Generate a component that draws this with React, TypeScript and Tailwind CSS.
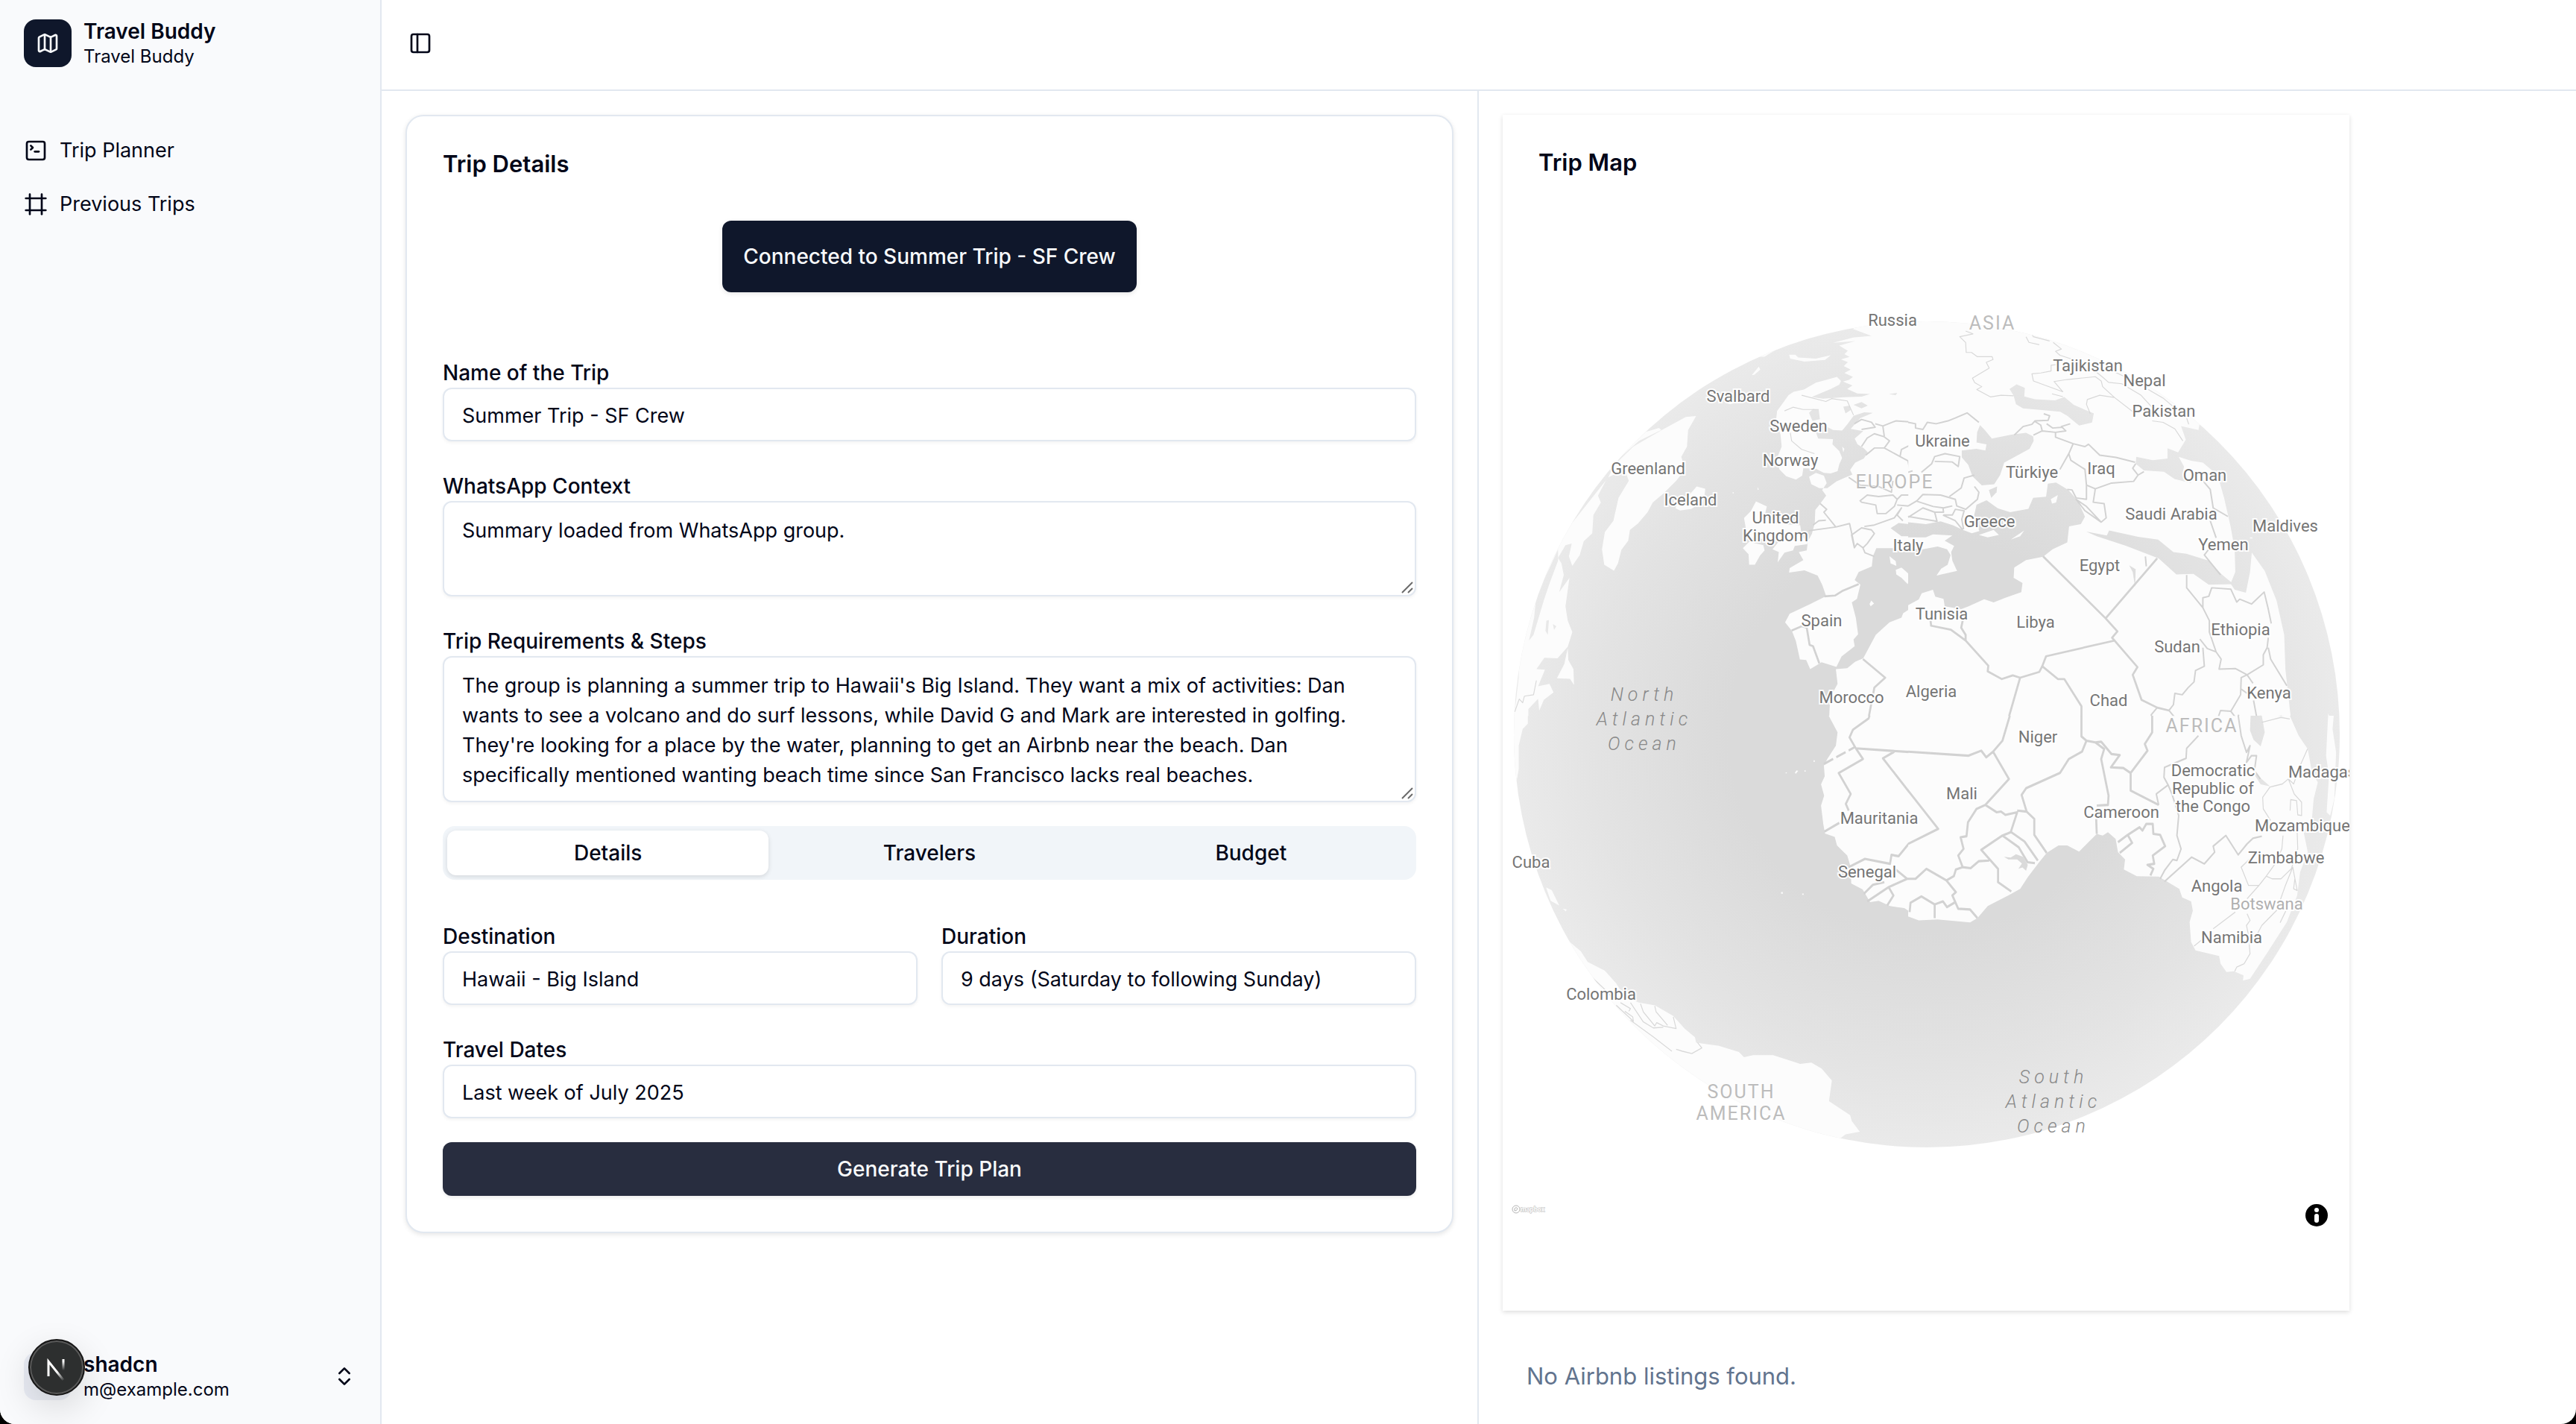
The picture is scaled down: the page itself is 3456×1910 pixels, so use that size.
import React, { useState } from 'react';
import { ChevronsUpDown, Frame, Map, PanelLeft, SquareTerminal } from 'lucide-react';
import { clsx } from 'clsx';

const navItems = [
  { label: 'Trip Planner', icon: SquareTerminal },
  { label: 'Previous Trips', icon: Frame },
];

const tabs = ['Details', 'Travelers', 'Budget'];

const requirements =
  "The group is planning a summer trip to Hawaii's Big Island. They want a mix of activities: Dan wants to see a volcano and do surf lessons, while David G and Mark are interested in golfing. They're looking for a place by the water, planning to get an Airbnb near the beach. Dan specifically mentioned wanting beach time since San Francisco lacks real beaches.";

type MapLabel = { x: number; y: number; lines: string[] };

const countries: MapLabel[] = [
  { x: 2539, y: 429, lines: ['Russia'] },
  { x: 2801, y: 490, lines: ['Tajikistan'] },
  { x: 2877, y: 510, lines: ['Nepal'] },
  { x: 2903, y: 551, lines: ['Pakistan'] },
  { x: 2332, y: 531, lines: ['Svalbard'] },
  { x: 2413, y: 571, lines: ['Sweden'] },
  { x: 2606, y: 591, lines: ['Ukraine'] },
  { x: 2402, y: 617, lines: ['Norway'] },
  { x: 2211, y: 628, lines: ['Greenland'] },
  { x: 2726, y: 633, lines: ['Türkiye'] },
  { x: 2819, y: 628, lines: ['Iraq'] },
  { x: 2958, y: 637, lines: ['Oman'] },
  { x: 2268, y: 670, lines: ['Iceland'] },
  { x: 2382, y: 706, lines: ['United', 'Kingdom'] },
  { x: 2669, y: 699, lines: ['Greece'] },
  { x: 2560, y: 731, lines: ['Italy'] },
  { x: 2913, y: 689, lines: ['Saudi Arabia'] },
  { x: 3066, y: 705, lines: ['Maldives'] },
  { x: 2983, y: 730, lines: ['Yemen'] },
  { x: 2817, y: 758, lines: ['Egypt'] },
  { x: 2444, y: 832, lines: ['Spain'] },
  { x: 2605, y: 823, lines: ['Tunisia'] },
  { x: 2731, y: 834, lines: ['Libya'] },
  { x: 3006, y: 844, lines: ['Ethiopia'] },
  { x: 2921, y: 867, lines: ['Sudan'] },
  { x: 2484, y: 935, lines: ['Morocco'] },
  { x: 2591, y: 927, lines: ['Algeria'] },
  { x: 2829, y: 939, lines: ['Chad'] },
  { x: 3044, y: 929, lines: ['Kenya'] },
  { x: 2734, y: 988, lines: ['Niger'] },
  { x: 2969, y: 1057, lines: ['Democratic', 'Republic of', 'the Congo'] },
  { x: 3131, y: 1035, lines: ['Madagascar'] },
  { x: 3089, y: 1107, lines: ['Mozambique'] },
  { x: 3067, y: 1150, lines: ['Zimbabwe'] },
  { x: 2632, y: 1064, lines: ['Mali'] },
  { x: 2846, y: 1089, lines: ['Cameroon'] },
  { x: 2521, y: 1097, lines: ['Mauritania'] },
  { x: 2505, y: 1169, lines: ['Senegal'] },
  { x: 2974, y: 1188, lines: ['Angola'] },
  { x: 2994, y: 1257, lines: ['Namibia'] },
  { x: 2054, y: 1156, lines: ['Cuba'] },
  { x: 2148, y: 1333, lines: ['Colombia'] },
];

const continents: MapLabel[] = [
  { x: 2673, y: 433, lines: ['ASIA'] },
  { x: 2542, y: 646, lines: ['EUROPE'] },
  { x: 2954, y: 973, lines: ['AFRICA'] },
  { x: 2336, y: 1478, lines: ['SOUTH', 'AMERICA'] },
];

const oceans: MapLabel[] = [
  { x: 2206, y: 964, lines: ['North', 'Atlantic', 'Ocean'] },
  { x: 2755, y: 1477, lines: ['South', 'Atlantic', 'Ocean'] },
];

function Label({ label, leading, className }: { label: MapLabel; leading: number; className: string }) {
  const top = label.y - ((label.lines.length - 1) * leading) / 2;
  return (
    <text textAnchor="middle" className={className}>
      {label.lines.map((line, i) => (
        <tspan key={line} x={label.x} y={top + i * leading} dy="0.36em">
          {line}
        </tspan>
      ))}
    </text>
  );
}

const land = 'fill-[#fcfcfc]';
const bold = 'fill-none stroke-[#d2d2d2] stroke-[7px]';
const border = 'fill-none stroke-[#d2d2d2] stroke-[5px]';
const thin = 'fill-none stroke-[#d8d8d8] stroke-[3px]';

function Globe() {
  return (
    <svg viewBox="2016 282 1136 1476" className="block w-full h-auto" role="img" aria-label="Trip map">
      <defs>
        <radialGradient id="sphere" gradientUnits="userSpaceOnUse" cx="2585" cy="985" r="554">
          <stop offset="0" stopColor="#dadada" />
          <stop offset="0.48" stopColor="#dadada" />
          <stop offset="0.8" stopColor="#e3e3e3" />
          <stop offset="1" stopColor="#eaeaea" />
        </radialGradient>
        <clipPath id="globe"><circle cx="2585" cy="985" r="554" /></clipPath>
        <clipPath id="nw"><rect x="0" y="0" width="1464" height="1464" /></clipPath>
        <clipPath id="sw"><rect x="0" y="0" width="1464" height="1568" /></clipPath>
        <clipPath id="ne"><rect x="0" y="0" width="1568" height="1464" /></clipPath>
        <clipPath id="se"><rect x="0" y="0" width="1568" height="1568" /></clipPath>
        {/* everything painted black here lets the ocean show through */}
        <mask id="landmass" maskUnits="userSpaceOnUse" x="2016" y="400" width="1136" height="1200">
          <g transform="translate(2000 400) scale(0.38265)" fill="#fff">
            <g clipPath="url(#nw)">
              <path d="M1568 60 L1290 92 L1270 108 L1335 132 L1270 138 L1200 156 L1278 150 L1222 166 L1252 184 L1240 196 L1258 206 L1228 214 L1252 224 L1238 238 L1262 250 L1240 262 L1270 276 L1256 286 L1235 292 L1268 306 L1250 318 L1285 334 L1330 336 L1300 345 L1240 347 L1165 352 L1125 346 L1192 318 L1222 303 L1228 290 L1214 276 L1140 296 L1098 320 L1062 328 L1044 340 L1026 365 L1004 395 L1000 430 L1016 478 L1020 520 L1004 560 L1012 600 L1036 624 L1070 636 L1092 622 L1096 596 L1140 598 L1168 612 L1192 614 L1216 606 L1222 582 L1232 560 L1222 536 L1198 512 L1200 494 L1148 492 L1140 470 L1158 440 L1200 462 L1232 464 L1250 442 L1272 412 L1310 400 L1340 402 L1296 420 L1262 458 L1306 466 L1276 492 L1286 512 L1308 526 L1322 540 L1308 562 L1278 576 L1260 602 L1268 618 L1240 630 L1212 642 L1180 666 L1152 666 L1124 652 L1116 626 L1140 612 L1168 622 L1178 648 L1162 672 L1176 692 L1154 722 L1138 742 L1136 790 L1126 826 L1112 852 L1108 884 L1080 890 L1096 918 L1048 946 L1046 962 L1100 954 L1146 972 L1162 1004 L1176 1044 L1120 1072 L1048 1106 L1032 1136 L1056 1166 L1070 1202 L1084 1266 L1106 1268 L1120 1300 L1160 1276 L1212 1292 L1230 1256 L1276 1220 L1272 1196 L1288 1178 L1280 1120 L1266 1066 L1284 1054 L1296 1004 L1276 988 L1290 960 L1336 940 L1340 904 L1352 876 L1410 876 L1440 888 L1568 878 L1568 834 L1440 834 L1402 806 L1430 788 L1500 796 L1568 782Z" />
              <path d="M1568 1016 L1530 1026 L1504 1046 L1502 1068 L1446 1104 L1440 1120 L1398 1136 L1350 1180 L1320 1236 L1306 1262 L1278 1274 L1250 1297 L1210 1300 L1216 1352 L1190 1400 L1186 1480 L1200 1500 L1215 1568 L1568 1568Z" />
              <path d="M930 712 L968 730 L960 764 L1000 790 L1085 796 L1090 830 L1112 862 L1066 868 L1060 884 L1030 892 L1006 926 L1010 890 L988 880 L1012 850 L900 838 L888 770 L912 746Z" />
              <path d="M884 876 L906 854 L956 866 L960 884 L944 902 L926 934 L906 934 L904 898Z" />
              <path d="M664 744 L648 736 L660 700 L694 692 L722 660 L752 668 L750 690 L742 714 L704 738Z" />
              <path d="M720 413 L692 462 L688 520 L668 556 L682 600 L650 640 L606 684 L568 716 L550 750 L516 790 L488 812 L482 850 L458 882 L446 930 L432 955 L398 934 L390 880 L400 820 L430 780 L448 700 L484 640 L470 600 L412 628 L436 582 L500 520 L600 462 L684 416Z" />
              <path d="M590 455 L540 470 L470 530 L440 570 L520 500 L598 462Z" />
              <path d="M404 638 L376 692 L386 716 L360 760 L356 824 L326 852 L312 900 L286 938 L274 905 L284 860 L262 866 L236 910 L248 930 L256 970 L240 1030 L276 980 L262 1080 L270 1130 L286 1170 L270 1222 L234 1262 L188 1260 L160 1300 L190 1302 L166 1360 L206 1352 L220 1382 L186 1408 L170 1446 L166 1404 L132 1440 L132 1488 L112 1510 L106 1568 L40 1568 L40 1150 L130 980 L260 820Z" />
              <path d="M270 1226 L258 1282 L232 1332 L278 1334 L292 1356 L290 1300 L272 1268Z" />
              <path d="M1046 198 L1068 198 L1078 208 L1140 212 L1192 200 L1172 216 L1100 222 L1050 212Z" />
              <path d="M820 366 L850 348 L892 356 L840 372Z M1398 904 L1420 922 L1422 938 L1402 930Z M1420 952 L1440 944 L1472 972 L1462 1002 L1440 980 L1422 968Z M1328 1072 L1334 1060 L1344 1070 L1332 1080Z M1232 520 L1240 528 L1236 540Z M938 205 L1000 180 L960 205Z M915 270 L940 240 L945 250 L925 268Z M935 662 L940 670 L936 672Z M848 680 h4 v4 h-4Z" />
              <path fill="#000" d="M236 880 L204 950 L160 1040 L152 1120 L134 1200 L150 1180 L186 1060 L206 1000 L236 920Z M195 1130 L204 1128 L200 1180 L192 1166Z M218 1142 L230 1150 L222 1162Z M1116 402 L1130 388 L1150 392 L1154 424 L1128 430Z M1272 374 L1300 364 L1322 376 L1300 386Z M1236 380 L1258 376 L1262 392 L1244 404Z M1396 336 L1425 332 L1420 340Z M84 1452 L98 1330 L100 1240 L90 1330Z" />
            </g>
          </g>
          <g transform="translate(2560 400) scale(0.3954 0.38265)" fill="#000">
            <g clipPath="url(#ne)">
              <rect x="0" y="0" width="1568" height="1568" fill="#fff" />
              <path d="M244 445 L260 462 L284 492 L350 478 L400 472 L424 484 L426 500 L412 528 L362 556 L326 576 L312 620 L292 652 L250 656 L218 624 L204 584 L182 558 L182 534 L232 528 L262 534 L266 512 L232 506 L234 470Z" />
              <path d="M274 672 L302 660 L300 680 L282 700Z" />
              <path d="M344 318 L368 302 L396 314 L394 344 L430 354 L498 358 L530 346 L562 374 L630 404 L624 436 L580 446 L540 412 L516 398 L390 386 L366 372 L358 342Z" />
              <path d="M0 785 L60 792 L110 782 L152 796 L186 812 L216 824 L242 816 L222 770 L232 724 L266 708 L304 736 L346 750 L408 738 L424 700 L468 696 L474 650 L502 646 L544 672 L576 710 L600 766 L586 792 L546 800 L540 856 L490 880 L458 906 L400 918 L360 944 L358 980 L388 998 L384 1030 L330 1050 L290 1066 L258 1055 L205 1080 L180 1090 L124 1080 L120 1054 L92 1046 L84 1022 L46 1034 L36 1056 L0 1076Z" />
              <path fill="#fff" d="M0 838 L60 838 L84 828 L150 832 L124 850 L156 868 L146 890 L150 920 L166 956 L96 972 L112 948 L134 934 L144 900 L132 880 L100 870 L50 880 L0 876Z M240 830 L290 812 L308 830 L270 838Z M348 846 L394 814 L380 834Z M484 704 L508 690 L502 716 L488 720Z" />
              <path d="M604 818 L674 832 L682 814 L780 836 L848 846 L900 890 L944 896 L1020 920 L1062 966 L1104 1002 L1020 1004 L968 966 L910 968 L850 912 L740 868 L640 834Z" />
              <path d="M774 556 L830 568 L880 562 L880 526 L916 540 L942 496 L926 448 L985 462 L990 435 L1568 435 L1568 1568 L1310 1568 L1295 1440 L1280 1300 L1276 1180 L1250 1060 L1210 956 L1166 892 L1160 960 L1146 1032 L1108 1022 L1094 1000 L1110 960 L1108 880 L1094 800 L1072 700 L1050 620 L1000 576 L960 570 L918 556 L936 590 L930 620 L962 648 L904 634 L868 608 L800 604 L772 580Z" />
              <path fill="#fff" d="M1425 1455 L1444 1500 L1444 1568 L1424 1568Z M1160 838 h8 v4 h-8Z" />
              <path d="M1172 1466 L1198 1462 L1194 1500 L1210 1530 L1200 1568 L1162 1568 L1160 1500Z M750 936 L772 950 L770 1012 L762 960Z" />
            </g>
          </g>
          <g transform="translate(2000 960) scale(0.38265 0.44643)" fill="#fff">
            <g clipPath="url(#sw)">
              <path d="M1568 0 H1185 L1216 50 L1210 90 L1180 130 L1168 150 L1171 182 L1158 206 L1169 240 L1158 270 L1166 326 L1172 354 L1206 364 L1214 390 L1250 420 L1262 455 L1264 504 L1304 522 L1330 560 L1360 556 L1400 572 L1450 578 L1482 596 L1508 615 L1568 612Z" />
              <path d="M40 0 H130 L130 24 L112 40 L98 90 L98 160 L88 210 L40 210Z" />
              <path d="M272 676 L316 708 L340 740 L400 766 L440 804 L470 846 L520 862 L576 870 L640 902 L680 940 L716 966 L720 982 L800 992 L870 1010 L888 1026 L920 1020 L990 1020 L1085 1046 L1124 1042 L1160 1060 L1196 1096 L1186 1158 L1260 1200 L1266 1218 L1294 1250 L1244 1258 L1225 1270 L1200 1500 L200 1500 L200 760Z" />
              <path d="M166 480 L178 500 L172 506Z M194 516 L214 524 L240 570 L210 556Z M252 580 L266 582 L264 588Z M1066 172 L1072 164 L1078 166 L1070 174Z M1132 134 h4 v5 h-4Z M1100 164 h4 v4 h-4Z M1034 170 h4 v3 h-4Z M1018 530 h6 v5 h-6Z M1092 534 h5 v4 h-5Z" />
            </g>
          </g>
          <g transform="translate(2560 960) scale(0.3954 0.44643)" fill="#000">
            <g clipPath="url(#se)">
              <rect x="0" y="0" width="1568" height="1568" fill="#fff" />
              <path d="M0 603 L36 615 L100 612 L210 621 L235 608 L270 572 L340 540 L380 520 L406 485 L440 445 L470 412 L510 390 L540 390 L580 408 L640 355 L660 360 L678 350 L704 370 L712 410 L736 432 L732 462 L776 482 L850 483 L920 520 L930 546 L960 558 L966 586 L955 620 L960 680 L975 705 L1055 722 L1060 745 L1080 770 L1105 768 L1138 780 L1136 796 L1160 790 L1220 710 L1285 620 L1320 540 L1330 470 L1356 410 L1342 350 L1370 310 L1376 250 L1390 200 L1370 170 L1356 100 L1325 60 L1295 0 L1568 0 L1568 1568 L0 1568Z" />
              <path fill="#fff" d="M1425 0 L1444 0 L1440 40 L1452 110 L1446 250 L1432 300 L1420 290 L1428 180 L1418 120Z" />
              <path d="M1162 0 H1200 L1210 50 L1196 92 L1172 72 L1160 44Z M1168 168 L1184 178 L1228 212 L1196 206Z M325 424 L348 426 L366 416 L390 424 L406 448 L400 466 L388 456 L374 460 L386 444 L370 432 L340 432Z" />
            </g>
          </g>
        </mask>
      </defs>

      <circle cx="2585" cy="985" r="554" fill="url(#sphere)" />
      <g clipPath="url(#globe)">
        <rect x="2016" y="400" width="1136" height="1200" mask="url(#landmass)" className={land} />

        {/* national borders, one group for each quarter of the globe */}
        <g transform="translate(2000 400) scale(0.38265)">
          <g clipPath="url(#nw)" strokeLinejoin="round">
            <path className={border} d="M1275 440 L1300 425 L1335 435 L1348 452 L1300 460 M1348 440 L1375 448 L1420 430 L1490 435 L1498 460 L1530 435 L1568 440 M1300 520 L1320 490 L1345 475 L1378 485 L1398 500 L1380 525 L1345 525 L1315 550 M1375 450 L1380 485 M1380 525 L1435 555 L1440 530 L1480 510 M1435 555 L1463 570 L1470 605 L1510 610 L1568 575 M1255 628 L1295 655 L1360 660 L1405 680 L1410 640 M1295 710 L1320 690 L1360 695 L1410 690 L1425 705 L1415 730 L1385 755 L1355 755 L1350 725 L1300 715Z M1425 705 L1440 690 L1500 690 L1520 665 M1425 725 L1485 730 L1520 690 L1568 692" />
            <path className={thin} d="M1090 340 L1175 362 L1195 352 L1250 360 L1272 410 M1030 395 L1060 382 L1095 390 L1150 390 M1050 470 L1055 500 L1090 530 L1135 545" />
            <path className={border} d="M1265 830 L1300 805 L1335 812 L1345 825 L1320 860 L1305 875 L1285 860 L1275 875Z M1310 800 L1345 795 L1415 770 L1440 735 L1425 760 L1445 780 M1115 815 L1210 802 L1258 790 L1268 835 L1275 870 M1155 720 L1178 740 L1168 750 L1210 802 M1130 795 L1150 780 L1175 778 M1305 875 L1312 892 L1345 905 M1465 765 L1510 730 L1555 755 L1560 782Z" />
            <path className={bold} d="M1170 1045 L1208 1042 L1235 1025 L1290 1002 M1055 1165 L1090 1150 L1108 1155 L1118 1215 L1130 1220 L1152 1280 M1305 1265 L1383 1330 L1345 1365 L1325 1470 L1270 1510 L1258 1535 M1540 1120 L1542 1145 L1568 1150" />
            <path className={thin} d="M84 1450 L100 1405 L112 1418 L118 1395 L150 1390 L160 1340" />
          </g>
        </g>
        <g transform="translate(2560 400) scale(0.3954 0.38265)">
          <g clipPath="url(#ne)" strokeLinejoin="round">
            <path className={thin} d="M195 115 L220 125 L175 135 L195 155 L197 190 L215 190 L235 205 L285 205 L288 215 L265 225 L275 245 L218 280 L226 296 L250 310 L233 320 L280 346 L315 340 L358 342 M400 135 L410 155 L445 163 M365 112 L420 125 L425 135 L480 150 M492 155 L520 178 L500 186 L515 200 L560 215 M510 232 L485 235 V255 L450 262 L420 265 L425 290 L525 328 L495 292 L540 285 L635 275 L655 290 L660 310 L700 348 L650 340 L608 355 L605 372 L618 405 M640 260 L658 275 L680 295 L725 300 L790 340 L830 385 M700 348 L765 400 M815 320 L865 350 L945 420 L952 442 M828 430 L865 435 L905 458 L932 500 M700 258 L735 275 M488 335 L525 345" />
            <path className={border} d="M360 480 L390 450 L420 442 L430 430 L475 428 L480 412 L460 405 M425 480 L455 465 L450 445 L430 432 M455 465 L500 470 L535 465 L520 450 L550 440 M470 440 L490 455 L525 452 M500 470 V487 L560 510 L600 520 L612 512 L650 550 L705 558 L770 575 M560 510 L545 545 L515 600 M545 545 L552 568 L600 600 L605 655 L605 705 L570 700 L556 672 L540 670 M605 655 L635 668 L690 648 L765 642 L780 620 L800 608 M772 580 L762 596 L780 620 M635 668 L628 715 L665 720 L672 770 L655 785 L600 745 L570 705 L605 730 L655 785 M1000 640 L1025 670 L1035 735 L1085 765 M1025 780 L1045 840 M1020 880 L1005 900 L1060 970" />
            <path className={border} d="M0 435 L25 440 L25 455 L50 460 L65 435 L95 440 L135 430 L160 420 L200 402 L240 435 M0 610 L15 605 M45 610 L80 580 L90 555 L125 545 L175 555 L170 590 L150 574 L90 572 M140 695 L180 665 L190 630 L225 620 M0 728 L30 710 L50 688 L110 690 L160 705 L165 728 L195 740 L235 705 L240 680 L225 660 M30 712 L85 730 L120 735 L150 728 M0 768 L50 735 L90 750 L98 782 L0 765 M90 750 L120 750 L118 735 M118 760 L160 780 L185 812 M120 760 L150 760 L160 740 L190 745 L182 775 L188 810" />
            <path className={bold} d="M458 905 L670 1122 L845 912 M670 1122 L710 1168 L692 1190 L778 1293 L762 1320 L792 1408 L845 1435 L885 1445 M700 1200 L468 1255 L455 1290 L445 1310 L380 1330 L355 1322 L318 1335 L270 1308 L272 1288 L195 1200 L145 1162 L78 1148 L75 1120 M195 1200 L195 1180 L180 1155 L185 1130 M380 1330 L330 1510 M455 1290 L508 1335 L530 1335 L588 1430 L588 1550" />
            <path className={border} d="M945 970 V1015 L1000 1085 L1022 1130 L1022 1170 L1045 1240 L1015 1228 L990 1195 M1000 1085 L1000 1050 L1020 1045 L1030 1015 L1095 1020 L1115 1065 L1125 1055 L1165 1072 L1208 1030 L1222 1090 L1232 1140 M1045 1240 L1062 1265 L1055 1300 L1110 1298 L1150 1320 L1205 1285 V1250 L1218 1225 L1222 1190 M1222 1225 L1230 1265 L1285 1358 M805 905 L808 940" />
            <path className={border} d="M1000 1225 L1005 1290 L975 1305 L970 1345 L950 1365 L930 1390 L905 1385 L900 1425 L885 1445 L905 1470 L1050 1475 L1060 1445 L1095 1448 L1128 1390 L1130 1330 L1150 1320 M1095 1448 L1115 1475 L1118 1530 M845 1435 L825 1460 V1530 M1150 1320 L1170 1350 M1172 1410 L1182 1465 L1198 1490 L1265 1465 L1295 1475 M1130 1370 L1150 1385 M1115 1475 L1122 1460" />
          </g>
        </g>
        <g transform="translate(2000 960) scale(0.38265 0.44643)">
          <g clipPath="url(#sw)" strokeLinejoin="round">
            <path className={bold} d="M1568 115 L1280 98 L1258 65 L1270 42 L1325 8 L1335 -20 M1280 98 L1305 130 L1220 172 L1262 235 L1245 265 L1255 285 M1415 108 L1375 128 L1568 340 L1465 385 L1430 422 L1405 418 L1400 445 L1312 430 L1255 455 M1170 348 L1222 322 M1420 462 L1460 490 L1495 490 L1528 460 L1568 480 M1460 490 L1395 515 L1320 558 M1395 515 L1412 540 L1390 570 M1308 535 L1340 508 L1380 500 M1470 590 L1475 560 L1508 543 L1552 567 V608" />
            <path className={bold} strokeDasharray="36 12" d="M1168 145 L1275 95" />
            <path className={thin} d="M455 862 L490 880 L484 888 M490 862 L535 920 L570 938 L605 936 M525 865 L535 890 L575 932 L582 922 L605 932 L650 940 L640 905 M575 872 L580 890 L620 930 M440 870 L500 918 L498 905 L470 888 M490 915 L570 965 L635 1008 M650 1002 L672 1008 L705 1015 L740 998 L725 982 M345 778 L395 818 L430 850" />
          </g>
        </g>
        <g transform="translate(2560 960) scale(0.3954 0.44643)">
          <g clipPath="url(#se)" strokeLinejoin="round">
            <path className={bold} d="M345 0 L320 75 L288 108 L265 125 L248 105 L205 120 L0 108 M-80 128 L0 225 L102 340 L0 385 M288 108 L342 190 L262 268 L300 290 L315 288 L330 298 L370 290 L348 350 L320 360 L248 403 L305 460 L305 500 L350 528 M262 268 L232 280 L203 320 L198 362 L178 365 L188 400 L170 420 L185 455 L212 458 L240 437 L275 435 M370 285 L402 288 L428 310 L428 358 L470 412 M402 288 L385 238 L400 218 L515 172 L545 130 L590 108 L605 75 M588 0 V62 L605 75 L635 80 L665 100 L655 130 L680 240 L678 268 L640 270 M635 80 L655 78 L690 115 L718 118 L688 155 L730 157 L755 172 L812 105 L803 85 L828 50 V0 M755 172 V225 L850 268 M638 310 L640 355 M350 350 L395 378 L440 435 M320 360 L375 395 L405 440 L430 443" />
            <path className={bold} d="M185 455 L162 462 L155 482 L130 495 L62 460 L25 490 L0 490 M130 495 L162 530 L150 540 L160 560 L170 580 L210 582 L235 608 M160 560 L132 575 L118 558 L90 567 V608 M90 567 L45 543 L8 562 L5 590 M712 380 L745 358 L785 335 L795 345 L808 325 L830 325 L832 355 L855 358 L872 392 L830 420 L835 445 L812 448 L832 460 L822 480 M745 358 L760 382 L718 412" />
            <path className={border} d="M850 268 L842 235 L882 208 L868 185 L870 155 L943 128 L945 98 L985 60 M882 208 L895 235 L918 300 L912 360 L926 400 L912 435 L898 432 L870 465 L855 490 M870 498 L962 425 L1005 445 L1040 410 L1035 392 L1078 360 L1120 418 L1150 385 L1170 368 L1200 362 M1120 0 L1130 60 L1148 110 L1160 90 L1148 140 L1165 120 L1182 120 L1175 165 L1195 190" />
            <path className={thin} d="M1215 482 L1190 510 L1155 510 L1130 455 L1165 425 M1215 482 L1245 445 L1268 400 L1272 360 M1190 510 L1150 550 M1035 640 L1110 590 M970 692 L998 672 M1150 595 L1160 615 L1148 630 L1155 660 L1160 715 L1140 745 L1115 755 L1108 768 M1170 680 L1200 630 L1250 585 L1280 510 L1305 455 L1320 525 L1308 520 L1312 490 M1215 482 L1235 490 L1265 490 L1300 460 L1322 400 L1320 350 M1228 214 L1270 205 L1290 190 L1310 235 L1335 260 V300 L1322 298 L1318 255 L1298 252 L1296 285 M1228 214 L1203 245 L1205 280 L1230 315 M1355 100 L1330 150 L1308 205 L1290 190 M1200 20 L1265 5 L1295 10 M1262 622 L1285 580" />
          </g>
        </g>
      </g>

      {countries.map(label => (
        <Label
          key={label.lines[0]}
          label={label}
          leading={24}
          className="font-['Roboto'] text-[22px] font-normal fill-[#757575] stroke-white/90 stroke-[4px] [paint-order:stroke]"
        />
      ))}
      <Label
        label={{ x: 3041, y: 1212, lines: ['Botswana'] }}
        leading={24}
        className="font-['Roboto'] text-[22px] font-normal fill-[#b0b0b0] stroke-white/90 stroke-[4px] [paint-order:stroke]"
      />
      {continents.map(label => (
        <Label
          key={label.lines[0]}
          label={label}
          leading={29}
          className="font-['Roboto'] text-[25px] font-normal tracking-[2px] fill-[#bcbcbc] stroke-white/70 stroke-[2px] [paint-order:stroke]"
        />
      ))}
      {oceans.map(label => (
        <Label
          key={label.lines[0]}
          label={label}
          leading={33}
          className="font-['Roboto'] text-[25px] font-light italic tracking-[6px] fill-[#888888]"
        />
      ))}

      {/* attribution mark */}
      <g className="fill-white stroke-[#b5b5b5] stroke-1">
        <circle cx="2034" cy="1622" r="5" />
        <path d="M2032 1624 V1621 L2034 1619.500 L2036 1621 L2034.500 1623.500Z" />
        <text x="2040" y="1625" className="font-['Roboto'] text-[9px] font-bold [paint-order:stroke]">mapbox</text>
      </g>
    </svg>
  );
}

const control =
  'block w-full rounded-[12px] border-2 border-slate-200 bg-white px-6 text-[27px] text-slate-950 shadow-[0_2px_4px_rgba(0,0,0,0.05)] outline-none';

function Field({ id, label, value }: { id: string; label: string; value: string }) {
  return (
    <div>
      <label htmlFor={id} className="block text-[28px] leading-[40px] font-medium">{label}</label>
      <input id={id} type="text" defaultValue={value} className={clsx(control, 'h-[72px] pt-0.5')} />
    </div>
  );
}

function TextField({ id, label, value, rows }: { id: string; label: string; value: string; rows: string }) {
  return (
    <div>
      <label htmlFor={id} className="block text-[28px] leading-[40px] font-medium">{label}</label>
      <div className="relative">
        <textarea id={id} defaultValue={value} className={clsx(control, rows, 'resize-none overflow-hidden pt-[18px] pb-[14px] leading-[40px]')} />
        <svg viewBox="0 0 16 16" className="absolute right-1 bottom-1 size-4 fill-none stroke-[#6b6b6b] stroke-2 pointer-events-none">
          <path d="M1 15 L15 1 M9 15 L15 9" />
        </svg>
      </div>
    </div>
  );
}

function Sidebar() {
  return (
    <aside className="flex w-[512px] shrink-0 flex-col border-r-2 border-slate-200 bg-[#f9fafc] px-4 pt-[10px] pb-4">
      <a href="#" className="flex h-24 items-center gap-4 px-4">
        <span className="flex size-16 items-center justify-center rounded-[16px] bg-slate-900 text-slate-50">
          <Map className="size-8" />
        </span>
        <span className="grid">
          <span className="text-[28px] leading-[36px] font-semibold">Travel Buddy</span>
          <span className="text-[24px] leading-[32px]">Travel Buddy</span>
        </span>
      </a>

      <nav className="mt-16 flex flex-1 flex-col gap-2">
        {navItems.map(item => {
          const Icon = item.icon;
          return (
            <a key={item.label} href="#" className="flex h-16 items-center gap-4 px-4 text-[27px]">
              <Icon className="size-8" />
              <span>{item.label}</span>
            </a>
          );
        })}
      </nav>

      <button type="button" className="flex h-24 items-center gap-4 px-4 text-left">
        <span className="size-16 rounded-[16px] bg-[#e9ecf4]" />
        <span className="grid flex-1">
          <span className="text-[28px] leading-[36px] font-semibold">shadcn</span>
          <span className="text-[24px] leading-[32px]">m@example.com</span>
        </span>
        <ChevronsUpDown className="size-8" />
      </button>
    </aside>
  );
}

function TripForm() {
  const [active, setActive] = useState('Details');

  return (
    <form className="rounded-[24px] border-2 border-slate-200 bg-white p-12 shadow-[0_2px_6px_rgba(0,0,0,0.1)]">
      <h2 className="text-[31px] leading-[32px] font-semibold">Trip Details</h2>

      <div className="mt-[60px] flex justify-center">
        <button type="button" className="h-24 rounded-[12px] bg-slate-900 px-7 text-[28px] font-medium text-slate-50 shadow-[0_2px_6px_rgba(0,0,0,0.1)]">
          Connected to Summer Trip - SF Crew
        </button>
      </div>

      <div className="mt-[88px] flex flex-col gap-10">
        <Field id="name" label="Name of the Trip" value="Summer Trip - SF Crew" />
        <TextField id="context" label="WhatsApp Context" value="Summary loaded from WhatsApp group." rows="h-[128px]" />
        <TextField id="requirements" label="Trip Requirements & Steps" value={requirements} rows="h-[196px]" />
      </div>

      <div role="tablist" className="mt-8 grid h-[72px] grid-cols-3 rounded-[16px] bg-slate-100 p-[6px]">
        {tabs.map(tab => (
          <button
            key={tab}
            type="button"
            role="tab"
            aria-selected={tab === active}
            onClick={() => setActive(tab)}
            className={clsx(
              'rounded-[12px] text-[28px] font-medium',
              tab === active && 'bg-white shadow-[0_2px_6px_rgba(0,0,0,0.12)]'
            )}
          >
            {tab}
          </button>
        ))}
      </div>

      <div className="mt-14 flex flex-col gap-10">
        <div className="grid grid-cols-2 gap-8">
          <Field id="destination" label="Destination" value="Hawaii - Big Island" />
          <Field id="duration" label="Duration" value="9 days (Saturday to following Sunday)" />
        </div>
        <Field id="dates" label="Travel Dates" value="Last week of July 2025" />
      </div>

      <button type="submit" className="mt-8 h-[72px] w-full rounded-[12px] bg-[#282d3f] text-[28px] font-medium text-slate-50 shadow-[0_2px_4px_rgba(0,0,0,0.08)]">
        Generate Trip Plan
      </button>
    </form>
  );
}

export default function App() {
  return (
    <div className="min-h-screen bg-black font-['Inter',sans-serif] text-slate-950">
      <div className="relative flex min-h-screen overflow-hidden rounded-b-[20px] bg-white">
        <Sidebar />

        <div className="flex min-w-0 flex-1 flex-col">
          <header className="flex h-[122px] shrink-0 items-center border-b-2 border-slate-200 px-9 pb-1">
            <button type="button" aria-label="Toggle sidebar">
              <PanelLeft className="size-8" />
            </button>
          </header>

          <main className="grid flex-1 grid-cols-2">
            <section className="border-r-2 border-slate-200 p-8">
              <TripForm />
            </section>

            <section className="p-8 pb-0">
              <div className="relative max-w-[1136px] overflow-hidden bg-white shadow-[0_2px_6px_rgba(0,0,0,0.14)]">
                <h2 className="p-12 text-[31px] leading-[32px] font-semibold">Trip Map</h2>
                <Globe />
                <button type="button" aria-label="Attribution" className="absolute right-[29px] bottom-[113px] block">
                  <svg viewBox="0 0 30 30" className="size-[30px]">
                    <circle cx="15" cy="15" r="15" />
                    <circle cx="15" cy="8" r="3" fill="#fff" />
                    <rect x="12" y="13" width="6" height="12" rx="3" fill="#fff" />
                  </svg>
                </button>
              </div>
              <p className="p-8 pb-0 mt-8 text-[31px] leading-[48px] text-slate-500">No Airbnb listings found.</p>
            </section>
          </main>
        </div>

        {/* dev tools badge, floats over the account row */}
        <button
          type="button"
          aria-label="Open dev tools"
          className="absolute bottom-[38px] left-[38px] flex size-[76px] items-center justify-center rounded-full border-2 border-[#171717] bg-[#2d2f2f] shadow-[inset_0_0_0_2px_#5a5a5a,0_16px_48px_rgba(0,0,0,0.14)]"
        >
          <svg viewBox="0 0 40 40" className="size-10 fill-none stroke-[3px]">
            <defs>
              <linearGradient id="nStem" x1="0" y1="12" x2="0" y2="24" gradientUnits="userSpaceOnUse">
                <stop stopColor="#fff" />
                <stop offset="1" stopColor="#fff" stopOpacity="0" />
              </linearGradient>
              <linearGradient id="nSlash" x1="22" y1="25" x2="31" y2="37" gradientUnits="userSpaceOnUse">
                <stop stopColor="#fff" />
                <stop offset="1" stopColor="#fff" stopOpacity="0" />
              </linearGradient>
            </defs>
            <path d="M9 32 V12 L29 37" stroke="url(#nSlash)" />
            <path d="M29 9 V25" stroke="url(#nStem)" />
          </svg>
        </button>
      </div>
    </div>
  );
}
